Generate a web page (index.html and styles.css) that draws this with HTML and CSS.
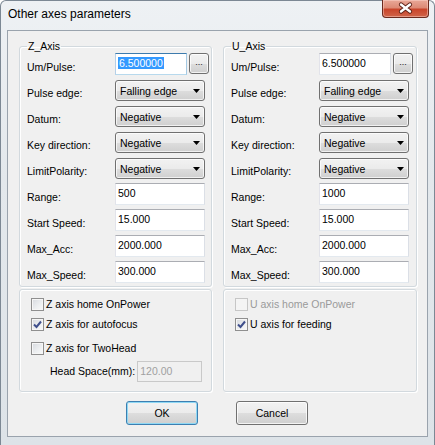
FILE: index.html
```html
<!DOCTYPE html>
<html>
<head>
<meta charset="utf-8">
<title>Other axes parameters</title>
<link rel="stylesheet" href="styles.css">
</head>
<body>
<div class="window">
  <div class="titlebar">
    <span class="title">Other axes parameters</span>
    <span class="close">
      <svg width="47" height="18" viewBox="0 0 47 18">
        <path d="M19 4.5 L28 11.5 M28 4.5 L19 11.5" stroke="#5b2016" stroke-width="4.2" stroke-linecap="round" fill="none"/>
        <path d="M19 4.5 L28 11.5 M28 4.5 L19 11.5" stroke="#ffffff" stroke-width="2.4" stroke-linecap="round" fill="none"/>
      </svg>
    </span>
  </div>
  <div class="client">
    <div class="columns">
      <div class="col">
        <fieldset class="group params">
          <legend>Z_Axis</legend>
          <div class="form">
            <span class="lbl">Um/Pulse:</span>
            <div class="ctrl-btn"><span class="edit short focus"><span class="sel">6.500000</span></span><span class="dots">...</span></div>
            <span class="lbl">Pulse edge:</span>
            <div class="combo"><span class="ctext">Falling edge</span><svg class="arrow" width="7" height="4" viewBox="0 0 7 4"><path d="M0 0 H7 L3.5 4 Z" fill="#000"/></svg></div>
            <span class="lbl">Datum:</span>
            <div class="combo"><span class="ctext">Negative</span><svg class="arrow" width="7" height="4" viewBox="0 0 7 4"><path d="M0 0 H7 L3.5 4 Z" fill="#000"/></svg></div>
            <span class="lbl">Key direction:</span>
            <div class="combo"><span class="ctext">Negative</span><svg class="arrow" width="7" height="4" viewBox="0 0 7 4"><path d="M0 0 H7 L3.5 4 Z" fill="#000"/></svg></div>
            <span class="lbl">LimitPolarity:</span>
            <div class="combo"><span class="ctext">Negative</span><svg class="arrow" width="7" height="4" viewBox="0 0 7 4"><path d="M0 0 H7 L3.5 4 Z" fill="#000"/></svg></div>
            <span class="lbl">Range:</span>
            <span class="edit">500</span>
            <span class="lbl">Start Speed:</span>
            <span class="edit">15.000</span>
            <span class="lbl">Max_Acc:</span>
            <span class="edit">2000.000</span>
            <span class="lbl">Max_Speed:</span>
            <span class="edit">300.000</span>
          </div>
        </fieldset>
        <div class="group opts">
          <div class="cbrow"><span class="cb"></span><span>Z axis home OnPower</span></div>
          <div class="cbrow"><span class="cb checked"><svg width="11" height="11" viewBox="0 0 11 11"><path d="M2 5.5 L4.5 8 L9 2.5" stroke="#3f4f8c" stroke-width="2" fill="none"/></svg></span><span>Z axis for autofocus</span></div>
          <div class="cbrow r3"><span class="cb"></span><span>Z axis for TwoHead</span></div>
          <div class="hsrow"><span>Head Space(mm):</span><span class="edit disabled hs">120.00</span></div>
        </div>
      </div>
      <div class="col">
        <fieldset class="group params">
          <legend>U_Axis</legend>
          <div class="form">
            <span class="lbl">Um/Pulse:</span>
            <div class="ctrl-btn"><span class="edit short">6.500000</span><span class="dots">...</span></div>
            <span class="lbl">Pulse edge:</span>
            <div class="combo"><span class="ctext">Falling edge</span><svg class="arrow" width="7" height="4" viewBox="0 0 7 4"><path d="M0 0 H7 L3.5 4 Z" fill="#000"/></svg></div>
            <span class="lbl">Datum:</span>
            <div class="combo"><span class="ctext">Negative</span><svg class="arrow" width="7" height="4" viewBox="0 0 7 4"><path d="M0 0 H7 L3.5 4 Z" fill="#000"/></svg></div>
            <span class="lbl">Key direction:</span>
            <div class="combo"><span class="ctext">Negative</span><svg class="arrow" width="7" height="4" viewBox="0 0 7 4"><path d="M0 0 H7 L3.5 4 Z" fill="#000"/></svg></div>
            <span class="lbl">LimitPolarity:</span>
            <div class="combo"><span class="ctext">Negative</span><svg class="arrow" width="7" height="4" viewBox="0 0 7 4"><path d="M0 0 H7 L3.5 4 Z" fill="#000"/></svg></div>
            <span class="lbl">Range:</span>
            <span class="edit">1000</span>
            <span class="lbl">Start Speed:</span>
            <span class="edit">15.000</span>
            <span class="lbl">Max_Acc:</span>
            <span class="edit">2000.000</span>
            <span class="lbl">Max_Speed:</span>
            <span class="edit">300.000</span>
          </div>
        </fieldset>
        <div class="group opts">
          <div class="cbrow disabled"><span class="cb"></span><span>U axis home OnPower</span></div>
          <div class="cbrow"><span class="cb checked"><svg width="11" height="11" viewBox="0 0 11 11"><path d="M2 5.5 L4.5 8 L9 2.5" stroke="#3f4f8c" stroke-width="2" fill="none"/></svg></span><span>U axis for feeding</span></div>
        </div>
      </div>
    </div>
    <div class="buttons">
      <span class="pb default">OK</span>
      <span class="pb">Cancel</span>
    </div>
  </div>
</div>
</body>
</html>
```

FILE: styles.css
```css
html, body {
  margin: 0;
  padding: 0;
  background: #ffffff;
}
body {
  font-family: "Liberation Sans", Arial, sans-serif;
  color: #000;
}
.window {
  width: 435px;
  height: 445px;
  box-sizing: border-box;
  border: 1px solid #7c8894;
  border-bottom: none;
  border-radius: 6px 6px 0 0;
  background: linear-gradient(180deg, #eef1f4 0%, #e3e8ec 40%, #dde3e8 100%);
  padding: 0 6px;
  display: flex;
  flex-direction: column;
}
.titlebar {
  height: 29px;
  display: flex;
  justify-content: space-between;
  align-items: flex-start;
}
.title {
  font-size: 12px;
  padding: 6px 0 0 1px;
  color: #000;
}
.close {
  display: block;
  width: 47px;
  height: 18px;
  margin-top: -1px;
  margin-right: -1px;
  box-sizing: border-box;
  border: 1px solid #6b2a1e;
  border-top: none;
  border-radius: 0 0 4px 4px;
  background: linear-gradient(180deg, #e9a898 0%, #dd8a75 45%, #c9452b 55%, #d0654a 100%);
  box-shadow: inset 0 0 0 1px rgba(255, 220, 210, 0.45);
}
.close svg {
  display: block;
  margin-left: -1px;
}
.client {
  width: 421px;
  height: 407px;
  box-sizing: border-box;
  border: 1px solid #9aa3ad;
  background: #f0f0f0;
  padding: 9px 10px 0 11px;
}
.columns {
  display: grid;
  grid-template-columns: 193px 194px;
  column-gap: 11px;
}
.group {
  margin: 0;
  border: 1px solid #d2d9de;
  border-radius: 3px;
  box-shadow: inset 1px 1px 0 #ffffff, 1px 1px 0 #ffffff;
  min-width: 0;
}
fieldset.params {
  padding: 1px 0 3px 7px;
}
legend {
  font-size: 10.5px;
  line-height: 12px;
  padding: 0 1px;
  margin: 0;
}
.form {
  display: grid;
  grid-template-columns: 88px 1fr;
  grid-auto-rows: 22px;
  row-gap: 4px;
  align-items: center;
}
.lbl {
  font-size: 10.5px;
  margin-top: 6px;
  white-space: nowrap;
}
.edit {
  display: block;
  width: 90px;
  height: 22px;
  box-sizing: border-box;
  border: 1px solid;
  border-color: #abadb3 #dbdfe6 #e3e9ef #e2e3ea;
  background: #ffffff;
  font-size: 10.5px;
  line-height: 18px;
  padding: 0 2px;
  white-space: nowrap;
}
.edit.short {
  width: 72px;
}
.edit.focus {
  border-color: #3d7bad #a4c9e3 #b7d9ed #b5cfe7;
}
.sel {
  background: #3399ff;
  color: #ffffff;
  padding: 0 1px;
}
.ctrl-btn {
  display: flex;
  gap: 2px;
  align-items: flex-start;
  height: 22px;
}
.dots {
  display: block;
  width: 20px;
  height: 21px;
  box-sizing: border-box;
  border: 1px solid #707070;
  border-radius: 3px;
  background: linear-gradient(180deg, #f2f2f2 0%, #ebebeb 50%, #dddddd 51%, #cfcfcf 100%);
  box-shadow: inset 0 0 0 1px rgba(255, 255, 255, 0.75);
  font-size: 9px;
  line-height: 17px;
  text-align: center;
  color: #222;
}
.combo {
  display: flex;
  align-items: center;
  width: 90px;
  height: 21px;
  box-sizing: border-box;
  border: 1px solid #707070;
  border-radius: 3px;
  background: linear-gradient(180deg, #f2f2f2 0%, #ebebeb 50%, #dddddd 51%, #cfcfcf 100%);
  box-shadow: inset 0 0 0 1px rgba(255, 255, 255, 0.7);
  padding: 2px 0 0 4px;
  font-size: 10.5px;
}
.ctext {
  flex: 1;
  white-space: nowrap;
}
.arrow {
  display: block;
  margin: 0 4px 1px 0;
}
.opts {
  height: 103px;
  box-sizing: border-box;
  margin-top: 2px;
  padding: 4px 0 0 11px;
}
.cbrow {
  display: flex;
  align-items: center;
  gap: 2px;
  height: 20px;
  font-size: 10.5px;
  white-space: nowrap;
}
.cbrow.r3 {
  margin-top: 4px;
}
.cb {
  display: flex;
  align-items: center;
  justify-content: center;
  width: 13px;
  height: 13px;
  box-sizing: border-box;
  border: 1px solid #8f8f8f;
  background: linear-gradient(135deg, #d6d9de 0%, #eceef0 55%, #fafafa 100%);
  box-shadow: inset 0 0 0 1px #f6f6f6;
}
.cbrow.disabled {
  color: #9a9a9a;
}
.cbrow.disabled .cb {
  border-color: #c6c6c6;
  background: #f4f4f4;
  box-shadow: none;
}
.hsrow {
  display: flex;
  align-items: center;
  gap: 2px;
  height: 22px;
  margin-top: 2px;
  padding-left: 19px;
  font-size: 10.5px;
  white-space: nowrap;
}
.edit.hs {
  width: 65px;
  height: 21px;
}
.edit.disabled {
  background: #f0f0f0;
  border-color: #c9c9c9;
  color: #a0a0a0;
}
.buttons {
  display: flex;
  justify-content: center;
  gap: 38px;
  margin-top: 9px;
  margin-left: -2px;
}
.pb {
  display: block;
  width: 72px;
  height: 24px;
  box-sizing: border-box;
  border: 1px solid #707070;
  border-radius: 3px;
  background: linear-gradient(180deg, #f2f2f2 0%, #ebebeb 50%, #dddddd 51%, #cfcfcf 100%);
  box-shadow: inset 0 0 0 1px rgba(255, 255, 255, 0.75);
  font-size: 10.5px;
  line-height: 22px;
  text-align: center;
  color: #000;
}
.pb.default {
  border-color: #3c7fb1;
  box-shadow: inset 0 0 0 1px #8fd8f4;
}
```
